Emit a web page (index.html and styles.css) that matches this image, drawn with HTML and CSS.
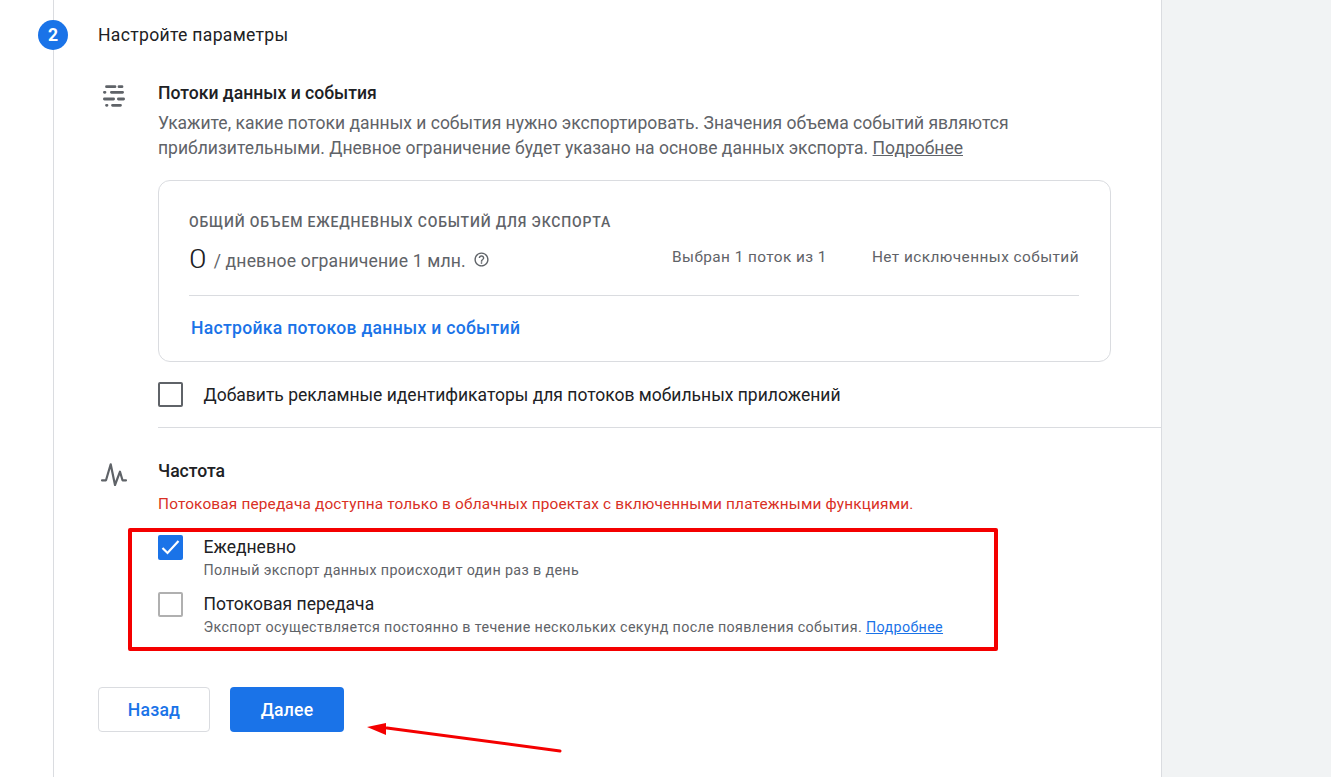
FILE: index.html
```html
<!DOCTYPE html>
<html lang="ru">
<head>
<meta charset="utf-8">
<title>Настройте параметры</title>
<link rel="stylesheet" href="styles.css">
</head>
<body>
<div class="page">
  <main class="panel">
    <div class="rail"><span class="step-num">2</span></div>
    <div class="content">
      <h1 class="step-title">Настройте параметры</h1>

      <section class="section section-streams">
        <div class="section-icon">
          <svg width="26" height="26" viewBox="0 0 26 26" fill="none" stroke="#5f6368" stroke-width="2.800" stroke-linecap="round">
            <path d="M5.500 3.700h8.500M18 3.700h3M3.400 9.300h.6M10.400 9.300h11.200M3.400 16h9.200M17.400 16h5.200M5.500 22.300h.5M11.500 22.300h8"/>
          </svg>
        </div>
        <div class="section-body">
          <h2 class="section-title">Потоки данных и события</h2>
          <p class="section-desc">Укажите, какие потоки данных и события нужно экспортировать. Значения объема событий являются приблизительными. Дневное ограничение будет указано на основе данных экспорта. <a class="desc-link" href="#">Подробнее</a></p>
          <div class="card">
            <div class="card-label">Общий объем ежедневных событий для экспорта</div>
            <div class="card-stats">
              <div class="count"><span class="count-num">0</span><span class="count-text">/ дневное ограничение 1 млн.</span>
                <svg class="help" width="17" height="17" viewBox="0 0 24 24" fill="#5f6368"><path d="M11 18h2v-2h-2v2zm1-16C6.480 2 2 6.480 2 12s4.480 10 10 10 10-4.480 10-10S17.520 2 12 2zm0 18c-4.410 0-8-3.590-8-8s3.590-8 8-8 8 3.590 8 8-3.590 8-8 8zm0-14c-2.210 0-4 1.790-4 4h2c0-1.100.9-2 2-2s2 .9 2 2c0 2-3 1.750-3 5h2c0-2.250 3-2.500 3-5 0-2.210-1.790-4-4-4z"/></svg>
              </div>
              <div class="stat stat-streams">Выбран 1 поток из 1</div>
              <div class="stat">Нет исключенных событий</div>
            </div>
            <div class="card-foot"><a class="card-link" href="#">Настройка потоков данных и событий</a></div>
          </div>
          <div class="ad-row">
            <span class="box box-dark"></span>
            <span class="ad-label">Добавить рекламные идентификаторы для потоков мобильных приложений</span>
          </div>
        </div>
      </section>

      <section class="section section-freq">
        <div class="section-icon">
          <svg width="26" height="26" viewBox="0 0 26 26" fill="none" stroke="#5f6368" stroke-width="2.200" stroke-linejoin="round" stroke-linecap="round">
            <path d="M1 19.300H5L9.700 3.300 14 24l5-13.300 2.500 8.600H25"/>
          </svg>
        </div>
        <div class="section-body">
          <h2 class="section-title">Частота</h2>
          <p class="warning">Потоковая передача доступна только в облачных проектах с включенными платежными функциями.</p>
          <div class="options">
            <div class="option">
              <span class="box box-checked">
                <svg width="25" height="25" viewBox="0 0 25 25" fill="none" stroke="#fff" stroke-width="2.200"><path d="M4.500 13l5 5 11-12"/></svg>
              </span>
              <div class="option-text">
                <div class="option-title">Ежедневно</div>
                <div class="option-desc">Полный экспорт данных происходит один раз в день</div>
              </div>
            </div>
            <div class="option">
              <span class="box box-light"></span>
              <div class="option-text">
                <div class="option-title">Потоковая передача</div>
                <div class="option-desc">Экспорт осуществляется постоянно в течение нескольких секунд после появления события. <a class="option-link" href="#">Подробнее</a></div>
              </div>
            </div>
            <div class="highlight"></div>
          </div>
        </div>
      </section>

      <div class="actions">
        <button class="btn btn-back">Назад</button>
        <button class="btn btn-next">Далее</button>
        <svg class="arrow" width="200" height="40" viewBox="0 0 200 40" fill="none">
          <path d="M24 12 L197 35" stroke="#f40000" stroke-width="3" stroke-linecap="round"/>
          <path d="M4 11 L23 7 L23 19 Z" fill="#f40000"/>
        </svg>
      </div>
    </div>
  </main>
  <aside class="side"></aside>
</div>
</body>
</html>
```
FILE: styles.css
```css
* { box-sizing: border-box; }
html, body { margin: 0; height: 100%; }
body { font-family: Roboto, "Liberation Sans", sans-serif; color: #202124; background: #fff; overflow: hidden; }
.page { display: flex; height: 777px; overflow: hidden; }
.panel { width: 1162px; flex: none; display: flex; border-right: 1px solid #dadce0; background: #fff; }
.side { flex: 1; background: #f1f3f4; }
.rail { width: 98px; flex: none; position: relative; padding: 20px 0 0 38px; }
.rail::before { content: ""; position: absolute; left: 53px; top: 0; bottom: 0; width: 1px; background: #dadce0; }
.step-num { position: relative; display: flex; align-items: center; justify-content: center; width: 30px; height: 30px; border-radius: 50%; background: #1a73e8; color: #fff; font-size: 17.600px; font-weight: 700; }
.content { flex: 1; min-width: 0; padding-top: 24px; }
.step-title { margin: 0; font-size: 17.600px; line-height: 22px; font-weight: 400; letter-spacing: .3px; }
.section { display: flex; }
.section-icon { width: 60px; flex: none; padding-left: 3px; }
.section-body { flex: 1; min-width: 0; }
.section-streams { padding-top: 37px; }
.section-streams .section-body { padding-bottom: 20px; border-bottom: 1px solid #dadce0; }
.section-title { margin: 0; font-size: 17.600px; line-height: 20px; font-weight: 500; }
.section-desc { margin: 8px 50px 0 0; font-size: 17.500px; line-height: 25px; color: #5f6368; }
.desc-link { color: #5f6368; }
.card { margin: 19px 50px 0 0; height: 182px; border: 1px solid #dadce0; border-radius: 12px; padding: 32px 31px 0 30px; }
.card-label { font-size: 14px; line-height: 18px; font-weight: 500; letter-spacing: .84px; text-transform: uppercase; color: #5f6368; }
.card-stats { display: flex; align-items: center; margin-top: 10px; height: 36px; }
.count { flex: 1; display: flex; align-items: center; color: #5f6368; }
.count-num { display: inline-block; font-size: 26.400px; font-weight: 300; color: #202124; margin-right: 9px; transform: scaleX(1.200); transform-origin: left center; }
.count-text { font-size: 17.600px; letter-spacing: .15px; padding-top: 4px; margin-left: 1px; }
.help { margin-left: 7px; }
.stat { font-size: 15.400px; color: #5f6368; letter-spacing: .43px; margin-top: -4px; }
.stat-streams { margin-right: 45px; }
.card-foot { margin-top: 18px; border-top: 1px solid #dadce0; padding: 22px 2px 0; }
.card-link { font-size: 17.600px; font-weight: 500; letter-spacing: .28px; color: #1a73e8; text-decoration: none; }
.ad-row { display: flex; align-items: center; margin-top: 20px; }
.box { width: 25px; height: 25px; flex: none; border-radius: 2px; display: block; }
.box-dark { border: 2px solid #5f6368; }
.box-light { border: 2px solid #b0b0b0; }
.box-checked { background: #1a73e8; }
.box-checked svg { display: block; }
.ad-label { margin-left: 20.500px; font-size: 17.500px; }
.section-freq { padding-top: 33px; }
.warning { margin: 13px 0 0; font-size: 15.400px; line-height: 20px; color: #d93025; letter-spacing: .16px; }
.options { position: relative; margin-top: 21px; }
.option { display: flex; height: 57px; }
.option .box { margin-right: 20.500px; }
.option-text { padding-top: 1px; }
.option-title { font-size: 17.500px; line-height: 22px; margin-bottom: 1px; }
.option-desc { font-size: 14.300px; line-height: 23px; letter-spacing: .36px; color: #5f6368; }
.option-link { color: #1a73e8; }
.highlight { position: absolute; left: -30px; top: -7px; width: 870px; height: 123px; border: 4px solid #f40000; border-radius: 2px; pointer-events: none; }
.actions { position: relative; display: flex; gap: 20px; margin-top: 38px; }
.btn { height: 45px; border-radius: 4px; font-family: inherit; font-size: 17.600px; font-weight: 500; letter-spacing: .2px; }
.btn-back { width: 112px; background: #fff; color: #1a73e8; border: 1px solid #dadce0; }
.btn-next { width: 114px; background: #1a73e8; color: #fff; border: 0; }
.arrow { position: absolute; left: 265px; top: 29px; }
```
